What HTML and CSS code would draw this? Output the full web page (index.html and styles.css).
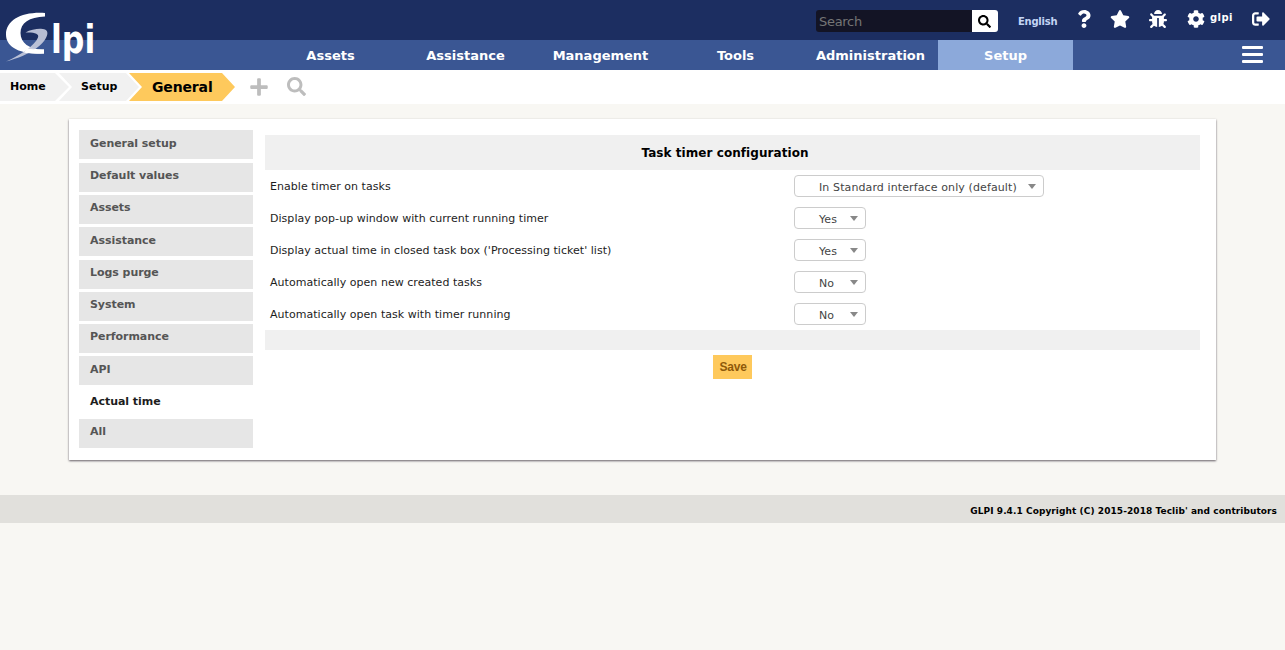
FILE: index.html
```html
<!DOCTYPE html>
<html lang="en">
<head>
<meta charset="utf-8">
<title>GLPI - General setup</title>
<link rel="stylesheet" href="styles.css">
</head>
<body>
<header class="header">
  <div class="topbar">
    <form class="search">
      <input class="search-input" type="text" placeholder="Search">
      <button class="search-btn" type="button" aria-label="Search"><svg width="13" height="13" viewBox="0 0 512 512"><path d="M505 442.7L405.3 343c-4.5-4.5-10.6-7-17-7H372c27.6-35.3 44-79.7 44-128C416 93.1 322.9 0 208 0S0 93.1 0 208s93.1 208 208 208c48.3 0 92.7-16.4 128-44v16.3c0 6.4 2.5 12.5 7 17l99.7 99.7c9.4 9.4 24.6 9.4 33.9 0l28.3-28.3c9.4-9.4 9.4-24.6.1-34zM208 336c-70.7 0-128-57.2-128-128 0-70.7 57.2-128 128-128 70.7 0 128 57.2 128 128 0 70.7-57.2 128-128 128z"/></svg></button>
    </form>
    <a class="language">English</a>
    <a class="tool tool-help"><svg width="14" height="18" viewBox="0 0 384 512"><path d="M202.021 0C122.202 0 70.503 32.703 29.914 91.026c-7.363 10.58-5.093 25.086 5.178 32.874l43.138 32.709c10.373 7.865 25.132 6.026 33.253-4.148 25.049-31.381 43.63-49.449 82.757-49.449 30.764 0 68.816 19.799 68.816 49.631 0 22.552-18.617 34.134-48.993 51.164-35.423 19.86-82.299 44.576-82.299 106.405V320c0 13.255 10.745 24 24 24h72.471c13.255 0 24-10.745 24-24v-5.773c0-42.86 125.268-44.645 125.268-160.627C377.504 66.256 286.902 0 202.021 0zM192 373.459c-38.196 0-69.271 31.075-69.271 69.271 0 38.195 31.075 69.27 69.271 69.27s69.271-31.075 69.271-69.271-31.075-69.27-69.271-69.27z"/></svg></a>
    <a class="tool tool-star"><svg width="20" height="18" viewBox="0 0 576 512"><path d="M259.3 17.8L194 150.2 47.9 171.5c-26.2 3.8-36.7 36.1-17.7 54.6l105.7 103-25 145.5c-4.5 26.3 23.2 46 46.4 33.7L288 439.6l130.7 68.7c23.2 12.2 50.9-7.4 46.4-33.7l-25-145.5 105.7-103c19-18.5 8.5-50.8-17.7-54.6L382 150.2 316.7 17.8c-11.7-23.6-45.6-23.9-57.4 0z"/></svg></a>
    <a class="tool tool-bug"><svg width="18" height="18" viewBox="0 0 512 512"><path d="M511.988 288.9c-.478 17.43-15.217 31.1-32.653 31.1H424v16c0 21.864-4.882 42.584-13.6 61.145l60.228 60.228c12.496 12.497 12.496 32.758 0 45.255-12.498 12.497-32.759 12.496-45.256 0l-54.736-54.736C345.886 467.965 314.351 480 280 480V236c0-6.627-5.373-12-12-12h-24c-6.627 0-12 5.373-12 12v244c-34.351 0-65.886-12.035-90.636-32.108l-54.736 54.736c-12.498 12.497-32.759 12.496-45.256 0-12.496-12.497-12.496-32.758 0-45.255l60.228-60.228C92.882 378.584 88 357.864 88 336v-16H32.666C15.23 320 .491 306.33.013 288.9-.484 270.816 14.028 256 32 256h56v-58.745l-46.628-46.628c-12.496-12.497-12.496-32.758 0-45.255 12.498-12.497 32.758-12.497 45.256 0L141.255 160h229.489l54.627-54.627c12.498-12.497 32.758-12.497 45.256 0 12.496 12.497 12.496 32.758 0 45.255L424 197.255V256h56c17.972 0 32.484 14.816 31.988 32.9zM257 0c-61.856 0-112 50.144-112 112h224C369 50.144 318.856 0 257 0z"/></svg></a>
    <a class="tool tool-user"><svg width="18" height="18" viewBox="0 0 512 512"><path d="M487.4 315.7l-42.6-24.6c4.3-23.2 4.3-47 0-70.2l42.6-24.6c4.9-2.8 7.1-8.6 5.5-14-11.1-35.6-30-67.8-54.7-94.6-3.8-4.1-10-5.1-14.8-2.3L380.8 110c-17.9-15.4-38.5-27.3-60.8-35.1V25.8c0-5.6-3.9-10.5-9.4-11.7-36.7-8.2-74.3-7.8-109.2 0-5.5 1.2-9.4 6.1-9.4 11.7V75c-22.2 7.9-42.8 19.8-60.8 35.1L88.7 85.5c-4.9-2.8-11-1.9-14.8 2.3-24.7 26.7-43.6 58.9-54.7 94.6-1.7 5.4.6 11.2 5.5 14L67.3 221c-4.3 23.2-4.3 47 0 70.2l-42.6 24.6c-4.9 2.8-7.1 8.6-5.5 14 11.1 35.6 30 67.8 54.7 94.6 3.8 4.1 10 5.1 14.8 2.3l42.6-24.6c17.9 15.4 38.5 27.3 60.8 35.1v49.2c0 5.6 3.9 10.5 9.4 11.7 36.7 8.2 74.3 7.8 109.2 0 5.5-1.2 9.4-6.1 9.4-11.7v-49.2c22.2-7.9 42.8-19.8 60.8-35.1l42.6 24.6c4.9 2.8 11 1.9 14.8-2.3 24.7-26.7 43.6-58.9 54.7-94.6 1.5-5.5-.7-11.3-5.6-14.1zM256 336c-44.1 0-80-35.9-80-80s35.9-80 80-80 80 35.9 80 80-35.9 80-80 80z"/></svg><span class="user-name">glpi</span></a>
    <a class="tool tool-logout"><svg width="18" height="18" viewBox="0 0 512 512"><path d="M497 273L329 441c-15 15-41 4.5-41-17v-96H152c-13.3 0-24-10.7-24-24v-96c0-13.3 10.7-24 24-24h136V88c0-21.4 25.9-32 41-17l168 168c9.3 9.4 9.3 24.6 0 34zM192 436v-40c0-6.6-5.4-12-12-12H96c-17.7 0-32-14.3-32-32V160c0-17.7 14.3-32 32-32h84c6.6 0 12-5.4 12-12V76c0-6.6-5.4-12-12-12H96c-53 0-96 43-96 96v192c0 53 43 96 96 96h84c6.6 0 12-5.4 12-12z"/></svg></a>
  </div>
  <nav class="nav">
    <a class="nav-item">Assets</a>
    <a class="nav-item">Assistance</a>
    <a class="nav-item">Management</a>
    <a class="nav-item">Tools</a>
    <a class="nav-item">Administration</a>
    <a class="nav-item nav-active">Setup</a>
    <span class="burger"><i></i><i></i><i></i></span>
  </nav>
  <svg class="logo" width="100" height="66" viewBox="0 0 100 66">
    <path fill="#fff" d="M45 13C22 11.500 6 20 6 34.500C6 46 17 54.500 44 53.500V49.500C30 50 20.500 43 20.500 33C20.500 23 29 17 45 16.500Z"/>
    <path fill="#c3c8dc" fill-opacity=".93" d="M25.500 32.500C30 29.500 37 28.500 41 28.700C46 29 48.500 31 47 35.500C44.500 44 31 55 6 61.500C21 55 35 45 38 37.500C39.500 33.500 34 32 25.500 32.500Z"/>
    <path fill="#fff" d="M27 48.500C32 49.500 38 49.700 44 49.500V53.500C35 54 28 53.500 24 52.500Z"/>
    <text class="logo-text" transform="translate(51 52.700) scale(.9 1)">lpi</text>
  </svg>
</header>

<div class="crumbs">
  <a class="crumb crumb-home">Home</a>
  <a class="crumb crumb-setup">Setup</a>
  <a class="crumb crumb-current">General</a>
  <svg class="crumb-add" width="18" height="20" viewBox="0 0 448 512"><path d="M416 208H272V64c0-17.670-14.330-32-32-32h-32c-17.670 0-32 14.330-32 32v144H32c-17.670 0-32 14.330-32 32v32c0 17.670 14.330 32 32 32h144v144c0 17.670 14.330 32 32 32h32c17.670 0 32-14.330 32-32V304h144c17.670 0 32-14.330 32-32v-32c0-17.670-14.330-32-32-32z"/></svg>
  <svg class="crumb-search" width="19" height="19" viewBox="0 0 512 512"><path d="M505 442.7L405.3 343c-4.5-4.5-10.6-7-17-7H372c27.6-35.3 44-79.7 44-128C416 93.1 322.9 0 208 0S0 93.1 0 208s93.1 208 208 208c48.3 0 92.700-16.400 128-44v16.300c0 6.400 2.500 12.500 7 17l99.700 99.700c9.400 9.400 24.600 9.400 33.900 0l28.300-28.300c9.400-9.400 9.400-24.600.1-34zM208 336c-70.700 0-128-57.200-128-128 0-70.700 57.200-128 128-128 70.700 0 128 57.200 128 128 0 70.700-57.200 128-128 128z"/></svg>
</div>

<main class="panel">
  <ul class="tabs">
    <li class="tab">General setup</li>
    <li class="tab">Default values</li>
    <li class="tab">Assets</li>
    <li class="tab">Assistance</li>
    <li class="tab">Logs purge</li>
    <li class="tab">System</li>
    <li class="tab">Performance</li>
    <li class="tab">API</li>
    <li class="tab tab-active">Actual time</li>
    <li class="tab">All</li>
  </ul>
  <section class="config">
    <h1 class="config-title">Task timer configuration</h1>
    <div class="row"><span class="label">Enable timer on tasks</span><span class="select select-wide">In Standard interface only (default)</span></div>
    <div class="row"><span class="label">Display pop-up window with current running timer</span><span class="select">Yes</span></div>
    <div class="row"><span class="label">Display actual time in closed task box ('Processing ticket' list)</span><span class="select">Yes</span></div>
    <div class="row"><span class="label">Automatically open new created tasks</span><span class="select">No</span></div>
    <div class="row"><span class="label">Automatically open task with timer running</span><span class="select">No</span></div>
    <div class="divider"></div>
    <button class="save" type="button">Save</button>
  </section>
</main>

<footer class="footer">GLPI 9.4.1 Copyright (C) 2015-2018 Teclib' and contributors</footer>
</body>
</html>
```
FILE: styles.css
```css
* { box-sizing: border-box; }

body {
  margin: 0;
  background: #f8f7f3;
  color: #1d1d1d;
  font: 11px/14px Verdana, "DejaVu Sans", sans-serif;
}

.header { position: relative; height: 70px; }

.topbar {
  display: flex;
  align-items: flex-start;
  height: 40px;
  padding-left: 816px;
  background: #1c2e61;
}
.search { display: flex; width: 182px; height: 22px; margin: 10px 0 0; }
.search-input {
  width: 156px;
  height: 22px;
  padding: 0 3px;
  border: 0;
  border-radius: 3px 0 0 3px;
  background: #131425;
  color: #777;
  font: 13px "DejaVu Sans", sans-serif;
  letter-spacing: -.3px;
}
.search-input::placeholder { color: #757575; }
.search-btn {
  display: flex;
  align-items: center;
  justify-content: center;
  width: 26px;
  height: 22px;
  padding: 0 1px 0 0;
  border: 0;
  border-radius: 0 3px 3px 0;
  background: #fff;
}
.language { width: 59px; margin: 15px 0 0 20px; color: #c3d5f5; font-size: 10px; font-weight: bold; letter-spacing: -.25px; }
.tool { display: flex; color: #fff; fill: #fff; margin-top: 10px; }
.tool svg { flex: none; }
.tool-help { width: 33px; }
.tool-star { width: 39px; }
.tool-bug { width: 37px; }
.tool-user { width: 66px; gap: 5.500px; }
.tool-user svg { margin-left: .5px; }
.user-name { margin-top: 1px; font-size: 10px; font-weight: bold; letter-spacing: .4px; }

.nav { display: flex; height: 30px; padding-left: 263px; background: #3a5693; }
.nav-item {
  width: 135px;
  color: #fff;
  font-size: 13px;
  font-weight: bold;
  line-height: 31px;
  text-align: center;
}
.nav-active { background: #8ca9da; }
.burger { display: flex; flex-direction: column; gap: 4px; width: 21px; margin: 6px 0 0 169px; }
.burger i { height: 3px; border-radius: 1px; background: #fff; }

.logo { position: absolute; left: 0; top: 0; }
.logo-text { fill: #fff; font: bold 39px "DejaVu Sans Condensed", "DejaVu Sans", sans-serif; }

.crumbs { display: flex; height: 34px; padding-top: 3px; background: #fff; fill: #bdbdbd; }
.crumb { height: 28px; color: #000; font-weight: bold; line-height: 27px; background: #f1f1f1; }
.crumb-home { width: 69px; padding-left: 10px; clip-path: polygon(0 0, 55px 0, 100% 50%, 55px 100%, 0 100%); }
.crumb-setup { width: 80px; margin-left: -10px; padding-left: 22px; clip-path: polygon(0 0, 67px 0, 100% 50%, 67px 100%, 0 100%, 13px 50%); }
.crumb-current {
  width: 106px;
  margin-left: -10px;
  padding-left: 23px;
  background: #fec95c;
  font-size: 14px;
  letter-spacing: -.15px;
  line-height: 28px;
  clip-path: polygon(0 0, 93px 0, 100% 50%, 93px 100%, 0 100%, 13px 50%);
}
.crumb-add { margin: 4px 0 0 15px; }
.crumb-search { margin: 4px 0 0 18.500px; }

.panel {
  display: flex;
  width: 1147px;
  height: 341px;
  margin: 15px 0 0 69px;
  padding: 11.450px 16px 0 10px;
  background: #fff;
  box-shadow: 0 1px 2px 0 #655f66;
}
.tabs { width: 174px; margin: 0; padding: 0; list-style: none; }
.tab {
  height: 29px;
  margin-bottom: 3.280px;
  padding: 6.400px 11px;
  background: #e6e6e6;
  color: #555;
  font-weight: bold;
  letter-spacing: -.05px;
}
.tab-active { height: 27px; background: #fff; color: #1d1d1d; }

.config { flex: 1; margin: 4.550px 0 0 12px; }
.config-title {
  height: 35px;
  margin: 0;
  padding-right: 15px;
  background: #f0f0f0;
  color: #000;
  font-size: 12px;
  letter-spacing: .06px;
  line-height: 36px;
  text-align: center;
}
.row { display: flex; align-items: center; height: 32px; padding-left: 5px; }
.label { width: 524px; padding-top: 2px; letter-spacing: .035px; }
.select {
  display: flex;
  align-items: center;
  justify-content: space-between;
  width: 72px;
  height: 22px;
  padding: 4px 7px 0 24px;
  border: 1px solid #ccc;
  border-radius: 4px;
  color: #444;
  letter-spacing: .11px;
}
.select::after {
  content: "";
  margin-top: -3px;
  border: 4px solid transparent;
  border-top: 5px solid #888;
  border-bottom: 0;
}
.select-wide { width: 250px; }
.divider { height: 20px; background: #f0f0f0; }
.save {
  display: block;
  width: 39px;
  height: 24px;
  margin: 5px auto 0;
  padding: 0 0 0 1px;
  border: 0;
  background: #fec95c;
  color: #8f5a0a;
  font: bold 12px "Liberation Sans", Arial, sans-serif;
  letter-spacing: -.2px;
}

.footer {
  height: 28px;
  margin-top: 35px;
  padding-right: 8px;
  background: #e1e0dc;
  color: #000;
  font-size: 9px;
  font-weight: bold;
  letter-spacing: .07px;
  line-height: 32px;
  text-align: right;
}
```
